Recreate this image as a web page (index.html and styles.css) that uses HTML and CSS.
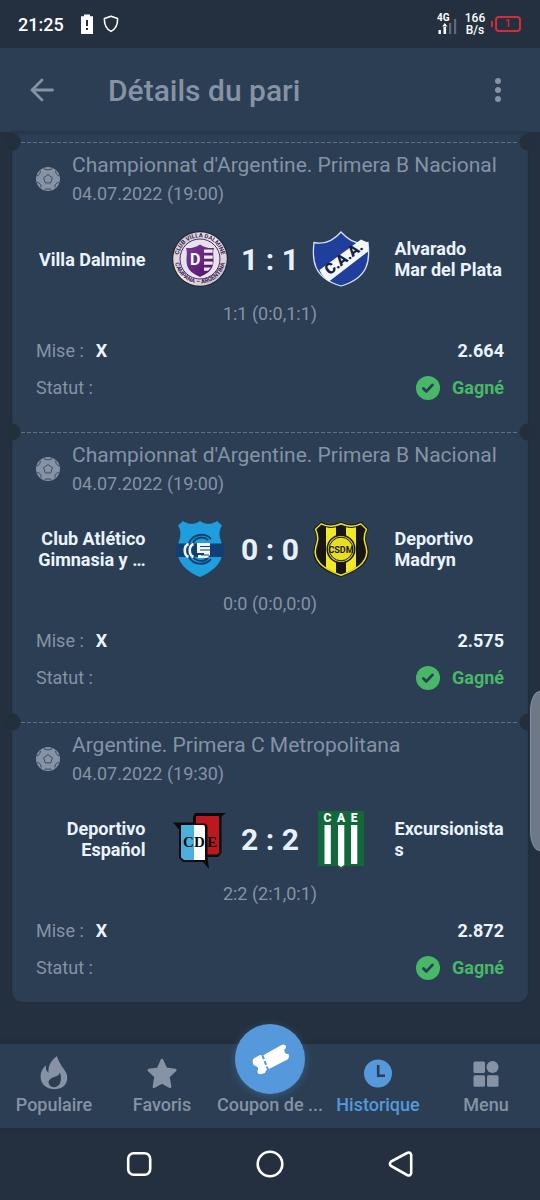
FILE: index.html
```html
<!DOCTYPE html>
<html lang="fr">
<head>
<meta charset="utf-8">
<meta name="viewport" content="width=device-width, initial-scale=1">
<title>Détails du pari</title>
<link rel="stylesheet" href="styles.css">
</head>
<body>
<svg class="defs" aria-hidden="true">
  <symbol id="ball" viewBox="0 0 24 24">
    <circle cx="12" cy="12" r="12" fill="#8593a5"/>
    <g fill="none" stroke="#3c4d61" stroke-width="1" stroke-linejoin="round">
      <path d="M12 7.600l4.400 3.200-1.700 5.100H9.300l-1.700-5.100z"/>
      <path d="M7.800.8l.9 1.500 3.300.6 3.300-.6.9-1.500M.5 8.800l1.600-.3 1.800-2.200.5-2.400-1-.9M23.500 8.800l-1.600-.3-1.800-2.200-.5-2.400 1-.9M.8 15.800l1.600-.2 2.300 2 .4 3M23.200 15.800l-1.600-.2-2.300 2-.4 3M8.800 23.500l.5-1.500h5.400l.5 1.500"/>
    </g>
  </symbol>
  <symbol id="check" viewBox="0 0 24 24">
    <circle cx="12" cy="12" r="12" fill="#48b868"/>
    <path d="M7.400 12.400l3 3 6.100-6.500" fill="none" stroke="#2b3e53" stroke-width="2.800" stroke-linecap="round" stroke-linejoin="round"/>
  </symbol>
</svg>

<div class="statusbar">
  <time>21:25</time>
  <svg class="status-battery" viewBox="0 0 14 20" aria-hidden="true"><path d="M1 2.200h3V.5h6v1.700h3V20H1z" fill="#fff"/><path d="M6 6h2v6H6zM6 14h2v2H6z" fill="#24303f"/></svg>
  <svg class="status-shield" viewBox="0 0 16 18" aria-hidden="true"><path d="M8 1.200l6.600 2.400c.2 6-1.200 10-6.600 12.800C2.600 13.600 1.200 9.600 1.400 3.600z" fill="none" stroke="#fff" stroke-width="1.600" stroke-linejoin="round"/></svg>
  <div class="status-signal">
    <span>4G</span>
    <svg viewBox="0 0 20 16" aria-hidden="true"><path d="M1.500 12h2.400v4H1.500zM6.500 9h2.600v7H6.500zM5.200 8.500L7.800 5l2.600 3.500z" fill="#fff"/><path d="M12 5h2.200v11H12zM17 1h2.200v15H17z" fill="#5f6977"/></svg>
  </div>
  <div class="status-speed">166<br>B/s</div>
  <div class="status-level">1</div>
</div>

<header class="appbar">
  <button class="icon-button" aria-label="Retour"><svg width="24" height="24" viewBox="0 0 24 24"><path d="M22.500 12H2M12 2L2 12l10 10" fill="none" stroke="#8593a5" stroke-width="2.800" stroke-linecap="round" stroke-linejoin="round"/></svg></button>
  <h1>Détails du pari</h1>
  <button class="icon-button" aria-label="Options"><svg width="8" height="24" viewBox="0 0 8 24"><g fill="#8593a5"><circle cx="4" cy="3" r="3"/><circle cx="4" cy="12" r="3"/><circle cx="4" cy="21" r="3"/></g></svg></button>
</header>

<main class="content">
  <div class="slip">
    <article class="bet">
      <div class="event">
        <svg class="ball"><use href="#ball"/></svg>
        <div><h2>Championnat d'Argentine. Primera B Nacional</h2><time>04.07.2022 (19:00)</time></div>
      </div>
      <div class="match">
        <strong class="team home">Villa Dalmine</strong>
        <svg class="crest" viewBox="0 0 56 56" role="img" aria-label="Villa Dalmine">
          <defs>
            <linearGradient id="silver" x2="1" y2="1"><stop stop-color="#c3bfc9"/><stop offset=".5" stop-color="#eceaf0"/><stop offset="1" stop-color="#bdb8c2"/></linearGradient>
            <linearGradient id="violet" x2="1" y2="1"><stop stop-color="#7c3a95"/><stop offset="1" stop-color="#4c126b"/></linearGradient>
            <path id="arc-top" d="M6.500 31a21.700 21.700 0 1 1 43 0"/>
            <path id="arc-bottom" d="M2.800 29.500a25.300 25.300 0 0 0 50.400 0"/>
          </defs>
          <circle cx="28" cy="28" r="28" fill="#26252e"/>
          <circle cx="28" cy="28" r="26.800" fill="url(#silver)"/>
          <circle cx="28" cy="28" r="20" fill="#e6e3ea" stroke="#54246e"/>
          <g class="ring-text"><text><textPath href="#arc-top" startOffset="50%">CLUB VILLA DALMINE</textPath></text><text><textPath href="#arc-bottom" startOffset="50%">CAMPANA – ARGENTINA</textPath></text></g>
          <path d="M14 17c5 .5 9-.5 14-3.500 5 3 9 4 14 3.500-2 5 .5 10-1 17-1.500 6-7 9-13 12-6-3-11.500-6-13-12-1.500-7 1-12-1-17z" fill="url(#violet)"/>
          <path d="M32 18.500h8.700v3.200H32zM32 24.500h8.700v3.200H32zM32 30.500h8.700v3.200H32zM32 36.500h7l-3 3.200h-4z" fill="#eee9f2"/>
          <text x="18" y="34" class="crest-d">D</text>
        </svg>
        <strong class="score">1 : 1</strong>
        <svg class="crest" viewBox="0 0 56 56" role="img" aria-label="Alvarado">
          <path d="M1 11.500C12 14 21 9 28 1c7 8 16 13 27 10.500 2 17 1.500 35-27 43.500C-.5 46.500-1 28.500 1 11.500z" fill="#203f9d" stroke="#d5e2f8" stroke-width="1.300"/>
          <path d="M6.500 39L48 8.500l7 3.200V20.500L16 50.500c-4-2.700-7.500-6.500-9.500-11.500z" fill="#f5f7fb"/>
          <text class="crest-caa" transform="translate(16.500 44.500) rotate(-38)">C.A.A.</text>
        </svg>
        <strong class="team">Alvarado<br>Mar del Plata</strong>
      </div>
      <p class="periods">1:1 (0:0,1:1)</p>
      <dl class="facts">
        <div><dt>Mise :</dt><dd class="pick">X</dd><dd class="odds">2.664</dd></div>
        <div><dt>Statut :</dt><dd class="won"><svg class="ball"><use href="#check"/></svg>Gagné</dd></div>
      </dl>
    </article>

    <article class="bet">
      <div class="event">
        <svg class="ball"><use href="#ball"/></svg>
        <div><h2>Championnat d'Argentine. Primera B Nacional</h2><time>04.07.2022 (19:00)</time></div>
      </div>
      <div class="match">
        <strong class="team home">Club Atlético<br>Gimnasia y …</strong>
        <svg class="crest" viewBox="0 0 56 56" role="img" aria-label="Gimnasia">
          <path d="M11 0c5 3.500 11 4 17 0 6 4 12 3.500 17 0l5 4.500c-3 5-3 9-1.500 14C52 29 54 45 28 56 2 45 4 29 7.500 18.500 9 13.500 9 9.500 6 4.500z" fill="#1e9edc"/>
          <path d="M4.500 22.500h47c.9 4.500 1 9 0 13.500h-47c-1-4.500-.9-9 0-13.500z" fill="#123f73"/>
          <g fill="none" stroke="#123f73" stroke-width="2"><path d="M39 18c-6-7-18-5-22 4M36 19c-5-4-12-3-15 3M17 36c4 8 16 9 22 2M21 36c4 5 11 5 15 1"/></g>
          <path d="M16.500 23c-5 2-5 11 0 13M21.500 23c-5 2-5 11 0 13" fill="none" stroke="#f2f6ff" stroke-width="2.600"/>
          <path d="M25 22h13v12l-3 3h-9v-3h6v-2h-7z" fill="#f2f6ff"/><path d="M28 25.500h10M28 29h10M29 34h8" stroke="#123f73" stroke-width="1"/>
        </svg>
        <strong class="score">0 : 0</strong>
        <svg class="crest" viewBox="0 0 56 56" role="img" aria-label="Deportivo Madryn">
          <defs><clipPath id="dm"><path d="M8.500 4.500c7 3.500 13 3 19.500-.5 6.500 3.500 12.500 4 19.500.5L52 9c-3.500 7-2 11 0 18 3 13-8 21-24 26.500C12 48 1 40 4 27c2-7 3.500-11 0-18z"/></clipPath></defs>
          <path d="M8 .8c7 3.800 13 3.500 20 0 7 3.500 13 3.800 20 0l7.500 7c-4 8-3 11-.7 18C59 41 46 50 28 56 10 50-3 41 1.200 26 3.500 19 4.500 16 .5 8z" fill="#171615"/>
          <path d="M8.200 2.800c7 3.400 13 3.200 19.800 0 6.800 3.200 12.800 3.400 19.800 0l5.700 5.500c-3.500 7.500-2.500 11-.3 18C56.500 40 45 48.500 28 54.300 11 48.500-.5 40 2.800 26.300 5 19.300 6 15.800 2.500 8.300z" fill="none" stroke="#ece527" stroke-width="1.500"/>
          <path clip-path="url(#dm)" d="M13 0h10v56H13zM33 0h10v56H33z" fill="#f1e925"/>
          <circle cx="28" cy="28" r="14.500" fill="#171615"/><circle cx="28" cy="28" r="13" fill="#e7de24"/><circle cx="28" cy="28" r="11.800" fill="none" stroke="#171615"/>
          <text x="28" y="31.500" class="crest-csdm">CSDM</text>
        </svg>
        <strong class="team">Deportivo<br>Madryn</strong>
      </div>
      <p class="periods">0:0 (0:0,0:0)</p>
      <dl class="facts">
        <div><dt>Mise :</dt><dd class="pick">X</dd><dd class="odds">2.575</dd></div>
        <div><dt>Statut :</dt><dd class="won"><svg class="ball"><use href="#check"/></svg>Gagné</dd></div>
      </dl>
    </article>

    <article class="bet">
      <div class="event">
        <svg class="ball"><use href="#ball"/></svg>
        <div><h2>Argentine. Primera C Metropolitana</h2><time>04.07.2022 (19:30)</time></div>
      </div>
      <div class="match">
        <strong class="team home">Deportivo<br>Español</strong>
        <svg class="crest" viewBox="0 0 56 56" role="img" aria-label="Deportivo Español">
          <path d="M1 11.500h20V6l2-4h31l-4.500 3.500V42l-3.500 4H35.500L37 58l-6-7H11l-4-4V18.500z" fill="#0b0b0d"/>
          <path d="M24 5h23v37l-2 1.500H24z" fill="#bd1720"/>
          <path d="M7 12.500h25q3.500 0 3.500 4v32H11L9 46V20z" fill="#0b0b0d"/>
          <path d="M9 14h13v35H12L9 46.500z" fill="#4bb0dc"/><path d="M22 14h9q2 0 2 2v33H22z" fill="#fafafa"/>
          <text y="36" class="crest-cde"><tspan x="16.500">C</tspan><tspan x="27.500">D</tspan><tspan x="40">E</tspan></text>
        </svg>
        <strong class="score">2 : 2</strong>
        <svg class="crest" viewBox="0 0 56 56" role="img" aria-label="Excursionistas">
          <path d="M5 0h46v55H32l-4 3-4-3H5z" fill="#12683a"/>
          <path d="M11.500 14h6.300v39h-6.300zM25 14h6.300v40L28 56l-3-2zM38 14h6.300v39H38z" fill="#fff"/>
          <text y="10.500" class="crest-cae"><tspan x="14.500">C</tspan><tspan x="28">A</tspan><tspan x="41">E</tspan></text>
        </svg>
        <strong class="team">Excursionistas</strong>
      </div>
      <p class="periods">2:2 (2:1,0:1)</p>
      <dl class="facts">
        <div><dt>Mise :</dt><dd class="pick">X</dd><dd class="odds">2.872</dd></div>
        <div><dt>Statut :</dt><dd class="won"><svg class="ball"><use href="#check"/></svg>Gagné</dd></div>
      </dl>
    </article>
  </div>
</main>

<nav class="tabs">
  <a href="#populaire"><svg viewBox="0 0 32 36"><path d="M19 1c-7 5-9 11-8.500 17C8 16 7.500 13 8 10 2 16 1.500 22 4 27.500 8.500 36.500 25 36.500 28.500 27c3-9-3-12-6-18-1.500-3-3-5-3.500-8z"/><path class="hole" d="M22 17.500c-1 3-3 3.500-6 4.500-5 1.500-6.500 5-4.500 8 2.500 3.500 8.500 2.500 10.500-1.500 1.500-4 1-7.500 0-11z"/></svg><span>Populaire</span></a>
  <a href="#favoris"><svg viewBox="0 0 32 36"><path d="M16 5l4 8.800 9.300 1.200-6.800 6.600 1.600 10.200-8.100-4.300-8.100 4.300 1.600-10.200L2.700 15l9.300-1.200z" stroke="currentColor" stroke-width="2.500" stroke-linejoin="round"/></svg><span>Favoris</span></a>
  <a href="#coupon" class="coupon">
    <i class="fab"><svg viewBox="0 0 38 32"><path d="M2.500 15.500L9 12q1.500-.5 2 1L30.500 2q3-1.500 4.500 1 .5 2-1.500 3.500c-.8 3 1 5 4 4.500q1.200 4-1 5.500L15 27.500q-.5 2.500-2.500 3l-3.500.8q-3-.5-2.500-3.300c1.500-3 0-5-3.500-5.500q-2.500-4-.5-7z" fill="#fff"/><path d="M11.500 12.500l6.500 17" stroke="#5599dc" stroke-width="2" stroke-dasharray="4 2"/></svg></i>
    <span>Coupon de ...</span></a>
  <a href="#historique" class="active"><svg viewBox="0 0 32 36"><circle cx="16" cy="18.500" r="14"/><path d="M16.200 10v10.800H23" fill="none" stroke="#2b3e53" stroke-width="2.600"/></svg><span>Historique</span></a>
  <a href="#menu"><svg viewBox="0 0 32 36"><rect x="3.500" y="6.500" width="11.500" height="11.500" rx="1.500"/><circle cx="22.500" cy="12" r="6"/><rect x="3.500" y="20.200" width="11.500" height="11.500" rx="1.500"/><rect x="17" y="20.200" width="11.500" height="11.500" rx="1.500"/></svg><span>Menu</span></a>
</nav>

<div class="sysnav">
  <button aria-label="Applications récentes"><svg width="28" height="28" viewBox="0 0 28 28"><rect x="3.200" y="3.200" width="22" height="21.600" rx="5.500"/></svg></button>
  <button aria-label="Accueil"><svg width="28" height="28" viewBox="0 0 28 28"><circle cx="14" cy="14" r="12.300"/></svg></button>
  <button aria-label="Précédent"><svg width="28" height="28" viewBox="0 0 28 28"><path d="M4 11.600Q1.800 14 4 16l16 9q3.500 1.500 4.200-2V5q-.7-3.500-4.200-2z"/></svg></button>
</div>
<div class="edge-handle"></div>
</body>
</html>
```
FILE: styles.css
```css
* { box-sizing: border-box; }
body {
  position: relative;
  display: flex;
  flex-direction: column;
  min-height: 100vh;
  margin: 0;
  overflow-x: hidden;
  background: #24303f;
  color: #8593a5;
  font-family: Roboto, sans-serif;
  font-size: 18px;
}
h1, h2, p, dl, dd { margin: 0; }
button { padding: 0; border: 0; background: none; }
svg { display: block; overflow: visible; }
.defs { position: absolute; width: 0; height: 0; }

.statusbar {
  display: flex;
  align-items: center;
  height: 48px;
  padding: 0 16px 0 18px;
  color: #fff;
  font-weight: 500;
}
.status-battery { width: 14px; height: 20px; margin-left: 16px; }
.status-shield { width: 16px; height: 18px; margin-left: 9px; }
.status-signal { margin-left: auto; width: 20px; font-size: 10px; line-height: 8px; }
.status-signal svg { width: 20px; height: 16px; margin-top: -4px; }
.status-signal span { font-weight: 700; }
.status-speed { width: 24px; margin-left: 6px; font-size: 12px; line-height: 12px; text-align: center; }
.status-level {
  position: relative;
  width: 26px;
  height: 16px;
  margin: 0 3px 0 8px;
  border: 2px solid #d52b36;
  border-radius: 4px;
  color: #d52b36;
  font-size: 11px;
  line-height: 12px;
  text-align: center;
}
.status-level::before {
  content: "";
  position: absolute;
  top: 3px;
  left: -6px;
  width: 2px;
  height: 6px;
  background: #d52b36;
}

.appbar {
  display: flex;
  align-items: center;
  height: 84px;
  padding: 0 18px;
  background: #2b3e53;
}
.icon-button { display: grid; place-items: center; width: 48px; height: 48px; }
.appbar h1 { flex: 1; margin-left: 42px; font-size: 30px; font-weight: 500; }

.content { flex: 1; padding: 0 12px 42px; }
.slip {
  padding: 10px 0 16px;
  border-radius: 0 0 10px 10px;
  background: #2b3e53;
  box-shadow: 0 0 2px #1f2b39, inset 0 2px 2px #26374a;
}
.bet { position: relative; padding: 9px 24px 0; }
.bet + .bet { margin-top: 26px; }
.bet::before {
  content: "";
  position: absolute;
  top: 0;
  left: 9px;
  right: 9px;
  height: 1px;
  background: repeating-linear-gradient(90deg, #607184 0 4px, transparent 4px 6px);
}
.bet::after {
  content: "";
  position: absolute;
  top: -9px;
  left: -9px;
  right: -9px;
  height: 18px;
  background:
    radial-gradient(circle closest-side, #232f3d 90%, transparent) left / 18px 18px no-repeat,
    radial-gradient(circle closest-side, #232f3d 90%, transparent) right / 18px 18px no-repeat;
}
.event { display: flex; align-items: center; gap: 12px; height: 56px; }
.ball { flex: none; width: 24px; height: 24px; }
.event h2 { font-size: 21px; font-weight: 400; line-height: 28px; white-space: nowrap; }
.event time { display: block; line-height: 29px; }
.match {
  display: grid;
  grid-template-columns: 1fr 56px 85px 56px 1fr;
  align-items: center;
  height: 56px;
  margin-top: 24px;
}
.team { padding-left: 26px; color: #eaf3ff; line-height: 21px; overflow-wrap: anywhere; }
.home { padding: 0 26px 0 0; text-align: right; white-space: nowrap; justify-self: end; }
.crest { width: 56px; height: 56px; }
.score { color: #e6f0ff; font-size: 30px; text-align: center; white-space: nowrap; }
.periods { margin-top: 15px; line-height: 24px; text-align: center; }
.facts { margin-top: 6px; }
.facts div { display: flex; align-items: center; height: 37px; }
.pick { margin-left: 12px; color: #eaf3ff; font-weight: 700; }
.odds { margin-left: auto; color: #eaf3ff; font-weight: 700; }
.won { display: flex; align-items: center; gap: 12px; margin-left: auto; color: #48b868; font-weight: 700; }

.ring-text { fill: #3f2451; font: 700 6px Roboto, sans-serif; text-anchor: middle; }
.crest-d { fill: #fff; font: 700 16px Roboto, sans-serif; }
.crest-caa { fill: #14213f; font: 900 15px Roboto, sans-serif; }
.crest-csdm { fill: #171615; font: 700 9px Roboto, sans-serif; text-anchor: middle; }
.crest-cde { fill: #0b0b0d; font: 700 15px "Liberation Serif", serif; text-anchor: middle; }
.crest-cae { fill: #fff; font: 900 12px Roboto, sans-serif; text-anchor: middle; }

.tabs {
  display: grid;
  grid-template-columns: repeat(5, 1fr);
  height: 84px;
  background: #2b3e53;
  box-shadow: 0 -1px 4px #1f2a37;
}
.tabs a {
  position: relative;
  display: flex;
  flex-direction: column;
  align-items: center;
  justify-content: flex-end;
  padding-bottom: 11px;
  color: #8593a5;
  font-weight: 500;
  line-height: 24px;
  text-decoration: none;
  white-space: nowrap;
}
.tabs a > svg { width: 32px; height: 36px; margin-bottom: 2px; fill: currentColor; }
.tabs .hole { fill: #2b3e53; }
.tabs .active { color: #5599dc; }
.fab {
  position: absolute;
  top: -20px;
  left: calc(50% - 35px);
  display: grid;
  place-items: center;
  width: 70px;
  height: 70px;
  border-radius: 50%;
  background: #5599dc;
  box-shadow: 0 2px 10px #5599dc55;
}
.fab svg { width: 38px; height: 32px; }

.sysnav { display: flex; justify-content: center; align-items: center; gap: 103px; height: 72px; }
.sysnav svg { fill: none; stroke: #fff; stroke-width: 2.6px; }
.edge-handle {
  position: absolute;
  top: 691px;
  right: 0;
  width: 10px;
  height: 160px;
  border: 1px solid #87909b;
  border-right: 0;
  border-radius: 12px 0 0 12px / 24px 0 0 24px;
  background: #6e7887;
}
```
